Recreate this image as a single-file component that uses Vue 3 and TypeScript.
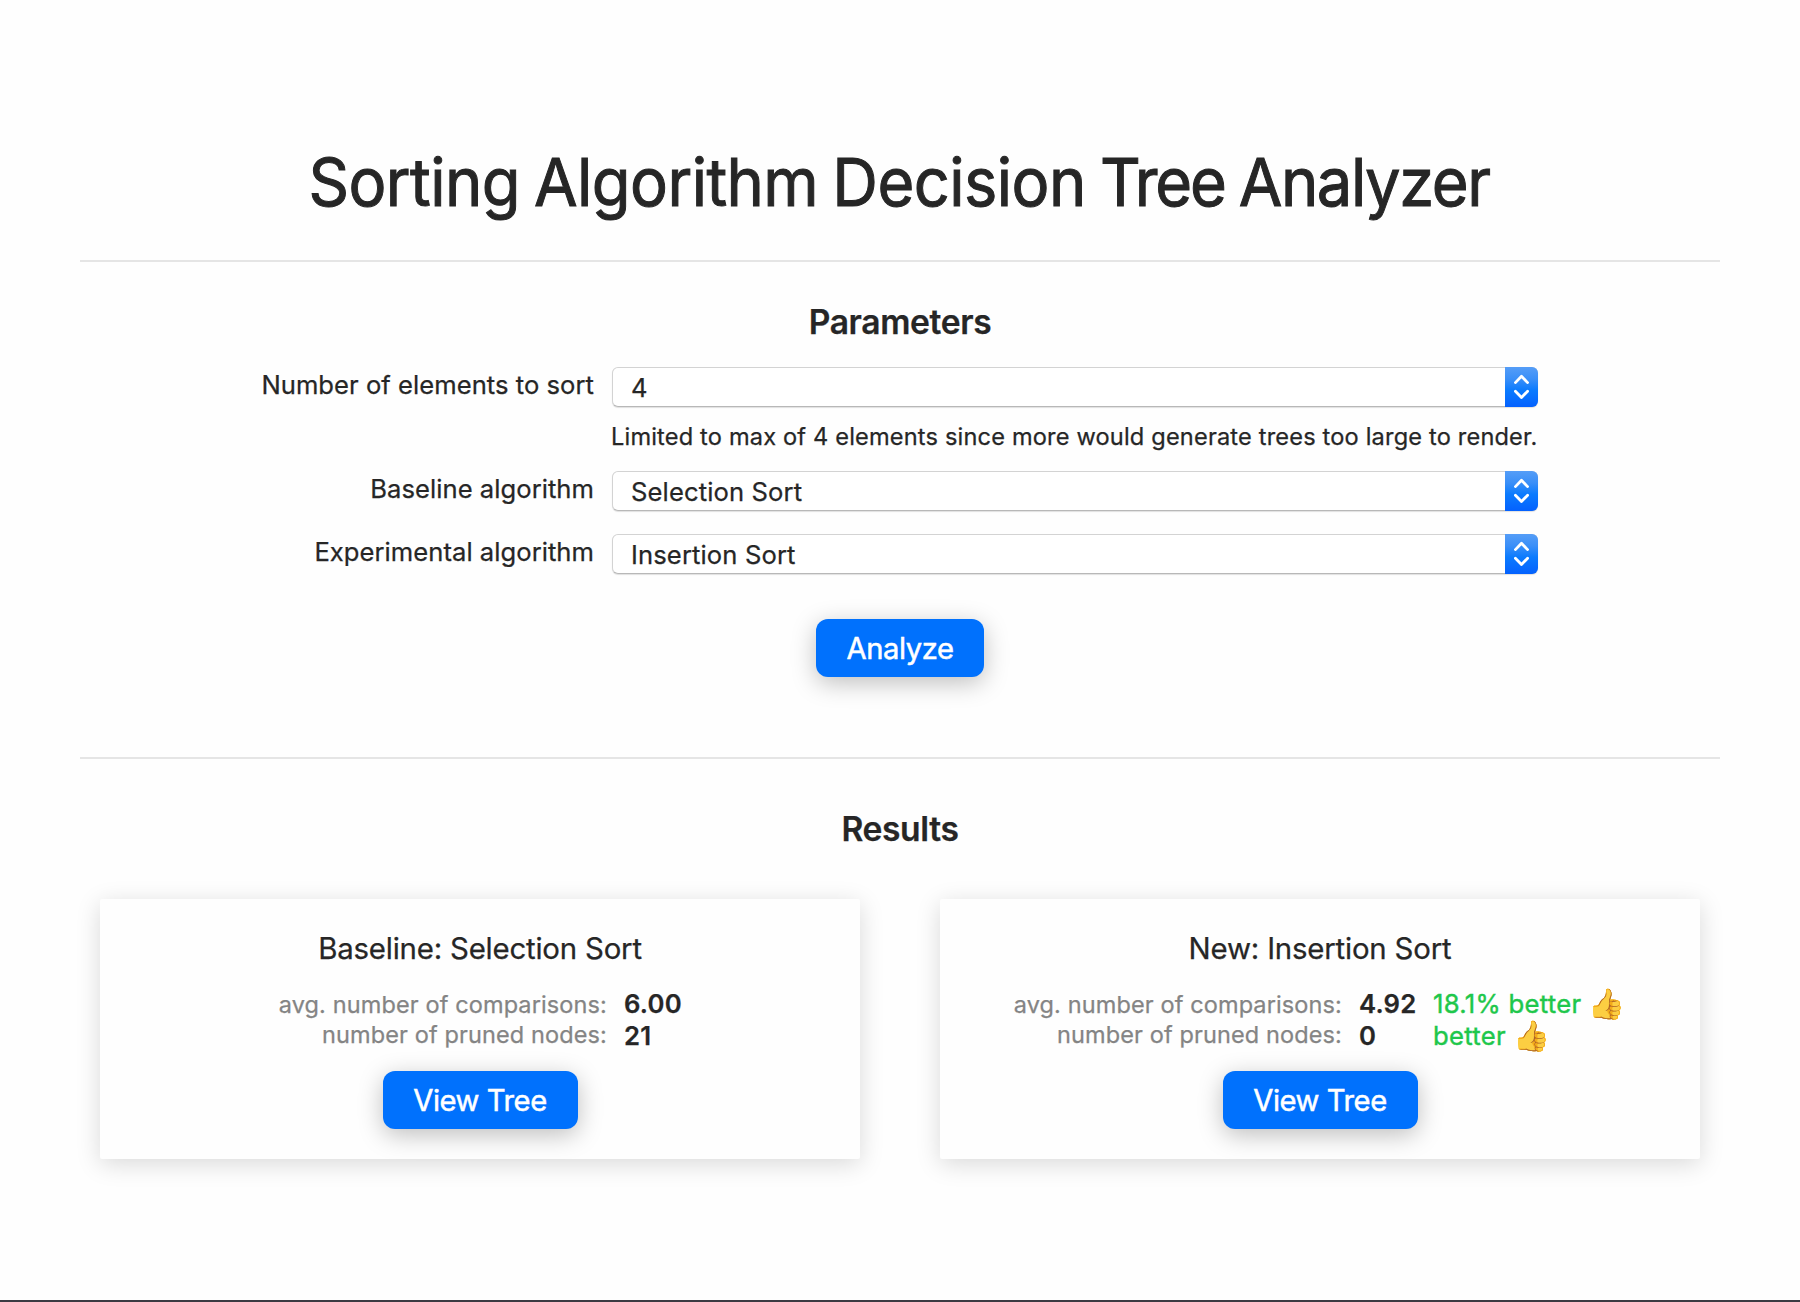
<script setup lang="ts">
import { reactive } from 'vue'

interface Field {
  id: string
  label: string
  options: string[]
  hint?: string
}

interface Stat {
  label: string
  value: string
  verdict?: string
}

interface ResultCard {
  title: string
  stats: Stat[]
}

const algorithms = ['Selection Sort', 'Insertion Sort']

const fields: Field[] = [
  {
    id: 'count',
    label: 'Number of elements to sort',
    options: ['4', '3', '2'],
    hint: 'Limited to max of 4 elements since more would generate trees too large to render.',
  },
  { id: 'baseline', label: 'Baseline algorithm', options: algorithms },
  { id: 'experimental', label: 'Experimental algorithm', options: algorithms },
]

const values = reactive<Record<string, string>>({
  count: '4',
  baseline: 'Selection Sort',
  experimental: 'Insertion Sort',
})

const cards: ResultCard[] = [
  {
    title: 'Baseline: Selection Sort',
    stats: [
      { label: 'avg. number of comparisons:', value: '6.00' },
      { label: 'number of pruned nodes:', value: '21' },
    ],
  },
  {
    title: 'New: Insertion Sort',
    stats: [
      { label: 'avg. number of comparisons:', value: '4.92', verdict: '18.1% better' },
      { label: 'number of pruned nodes:', value: '0', verdict: 'better' },
    ],
  },
]
</script>

<template>
  <main class="page">
    <h1>
      <span class="title">Sorting Algorithm Decision <span class="tighter">Tree</span> <span class="tight">Analyzer</span></span>
    </h1>

    <section class="parameters">
      <h2>Parameters</h2>
      <form @submit.prevent>
        <div v-for="f in fields" :key="f.id" class="row">
          <label :for="f.id">{{ f.label }}</label>
          <div class="field">
            <div class="select">
              <select :id="f.id" v-model="values[f.id]">
                <option v-for="o in f.options" :key="o">{{ o }}</option>
              </select>
              <svg class="stepper" viewBox="0 0 33 40" aria-hidden="true">
                <path d="M10.4 15.6 16.5 9.3l6.1 6.3M10.4 24.2l6.1 6.3 6.1-6.3" />
              </svg>
            </div>
            <p v-if="f.hint" class="hint">{{ f.hint }}</p>
          </div>
        </div>
        <button class="analyze">Analyze</button>
      </form>
    </section>

    <section class="results">
      <h2>Results</h2>
      <div class="cards">
        <article v-for="c in cards" :key="c.title" class="card">
          <h3>{{ c.title }}</h3>
          <div class="stats">
            <div class="names">
              <span v-for="s in c.stats" :key="s.label">{{ s.label }}</span>
            </div>
            <div class="numbers">
              <b v-for="s in c.stats" :key="s.label">{{ s.value }}</b>
            </div>
            <div v-if="c.stats[0].verdict" class="verdicts">
              <span v-for="s in c.stats" :key="s.label">{{ s.verdict }}<i>👍</i></span>
            </div>
          </div>
          <button class="view">View Tree</button>
        </article>
      </div>
    </section>
  </main>
</template>

<style>
body {
  background: #fefefe;
}
</style>

<style scoped>
* {
  box-sizing: border-box;
}

.page {
  display: flex;
  flex-direction: column;
  width: 1800px;
  height: 1302px;
  padding: 142px 80px 0;
  border-bottom: 2px solid #3b3a42;
  background: #fefefe;
  color: #262626;
  font-family: Inter, 'Noto Sans', sans-serif;
  -webkit-text-stroke: 0.25px currentColor;
  overflow: hidden;
}

h1,
h2,
h3,
p {
  margin: 0;
}

h1 {
  height: 80px;
  font-size: 66.5px;
  font-weight: 400;
  line-height: 80px;
  letter-spacing: -0.6px;
  word-spacing: -3.2px;
  text-align: center;
  white-space: nowrap;
  -webkit-text-stroke: 1px currentColor;
}

.title {
  display: inline-block;
  margin-left: -2px;
  transform: scaleX(0.951);
}

.tighter {
  letter-spacing: -2.4px;
}

.tight {
  letter-spacing: -1.5px;
}

h2 {
  font-size: 33.6px;
  font-weight: 600;
  line-height: 40px;
  letter-spacing: -0.35px;
  text-align: center;
}

.parameters {
  height: 497px;
  margin-top: 38px;
  padding-top: 40px;
  border-top: 2px solid #e5e5e5;
}

form {
  display: flex;
  flex-direction: column;
  margin-top: 25px;
}

.row {
  display: flex;
  gap: 18px;
  margin-bottom: 23px;
}

.row:first-child {
  margin-bottom: 20px;
}

label {
  width: 514px;
  font-size: 25.6px;
  line-height: 36px;
  letter-spacing: 0.04px;
  text-align: right;
}

.field {
  width: 926px;
}

.select {
  position: relative;
  height: 40px;
}

select {
  display: block;
  width: 100%;
  height: 40px;
  margin: 0;
  padding: 1px 40px 0 18px;
  border: 1px solid #d3d3d3;
  border-bottom-color: #b8b8b8;
  border-radius: 6px;
  outline: none;
  appearance: none;
  background: #fff;
  box-shadow: 0 1px 1px rgba(0, 0, 0, 0.12);
  color: #262626;
  font: 400 25.6px Inter, 'Noto Sans', sans-serif;
  letter-spacing: 0.12px;
}

.stepper {
  position: absolute;
  top: 0;
  right: 0;
  width: 33px;
  height: 40px;
  border-radius: 0 6px 6px 0;
  background: linear-gradient(#559df7 0%, #3a8ff8 30%, #0b7bfe 58%, #0461fe 100%);
  fill: none;
  stroke: #fff;
  stroke-width: 2.8;
  stroke-linecap: round;
  stroke-linejoin: round;
  pointer-events: none;
}

.hint {
  margin: 16px -10px 0 -1px;
  font-size: 23.6px;
  line-height: 28px;
  letter-spacing: 0.17px;
  white-space: nowrap;
}

button {
  display: block;
  height: 58px;
  margin: 0;
  padding: 1px 0 0;
  border: 0;
  border-radius: 12px;
  background: #0071fd;
  box-shadow: 0 6px 24px rgba(0, 0, 0, 0.25);
  color: #fff;
  font: 400 29.2px/57px Inter, 'Noto Sans', sans-serif;
  letter-spacing: -0.45px;
  -webkit-text-stroke: 0.5px #fff;
}

.analyze {
  align-self: center;
  width: 168px;
  margin-top: 22px;
}

.results {
  padding-top: 50px;
  border-top: 2px solid #e5e5e5;
}

.cards {
  display: flex;
  gap: 80px;
  margin-top: 50px;
  padding: 0 20px;
}

.card {
  display: flex;
  flex: 1;
  flex-direction: column;
  align-items: center;
  height: 260px;
  padding-top: 32px;
  border-radius: 2px;
  background: #fefefe;
  box-shadow: 0 5px 24px rgba(0, 0, 0, 0.15);
}

h3 {
  font-size: 29.4px;
  font-weight: 400;
  line-height: 36px;
  letter-spacing: -0.2px;
}

.stats {
  display: flex;
  gap: 16px;
  height: 64px;
  margin-top: 21px;
  white-space: nowrap;
}

.stats > div {
  display: flex;
  flex-direction: column;
}

.names {
  width: 330px;
  padding-top: 2px;
  padding-right: 1px;
  color: #848484;
  font-size: 23.5px;
  line-height: 30px;
  letter-spacing: 0.12px;
  text-align: right;
}

.numbers {
  width: 58px;
  font-size: 25.7px;
  line-height: 32px;
  letter-spacing: 0.2px;
}

.numbers b {
  font-weight: 600;
}

.verdicts {
  width: 194px;
  color: #1ec74b;
  font-size: 25.7px;
  line-height: 32px;
  letter-spacing: 0.28px;
  -webkit-text-stroke: 0.4px currentColor;
}

.verdicts span {
  display: flex;
  height: 32px;
}

.verdicts i {
  margin-left: 7px;
  font-size: 29.5px;
  font-style: normal;
  line-height: 30px;
  filter: saturate(0.85) brightness(1.02);
}

.view {
  width: 195px;
  margin-top: 19px;
}
</style>
